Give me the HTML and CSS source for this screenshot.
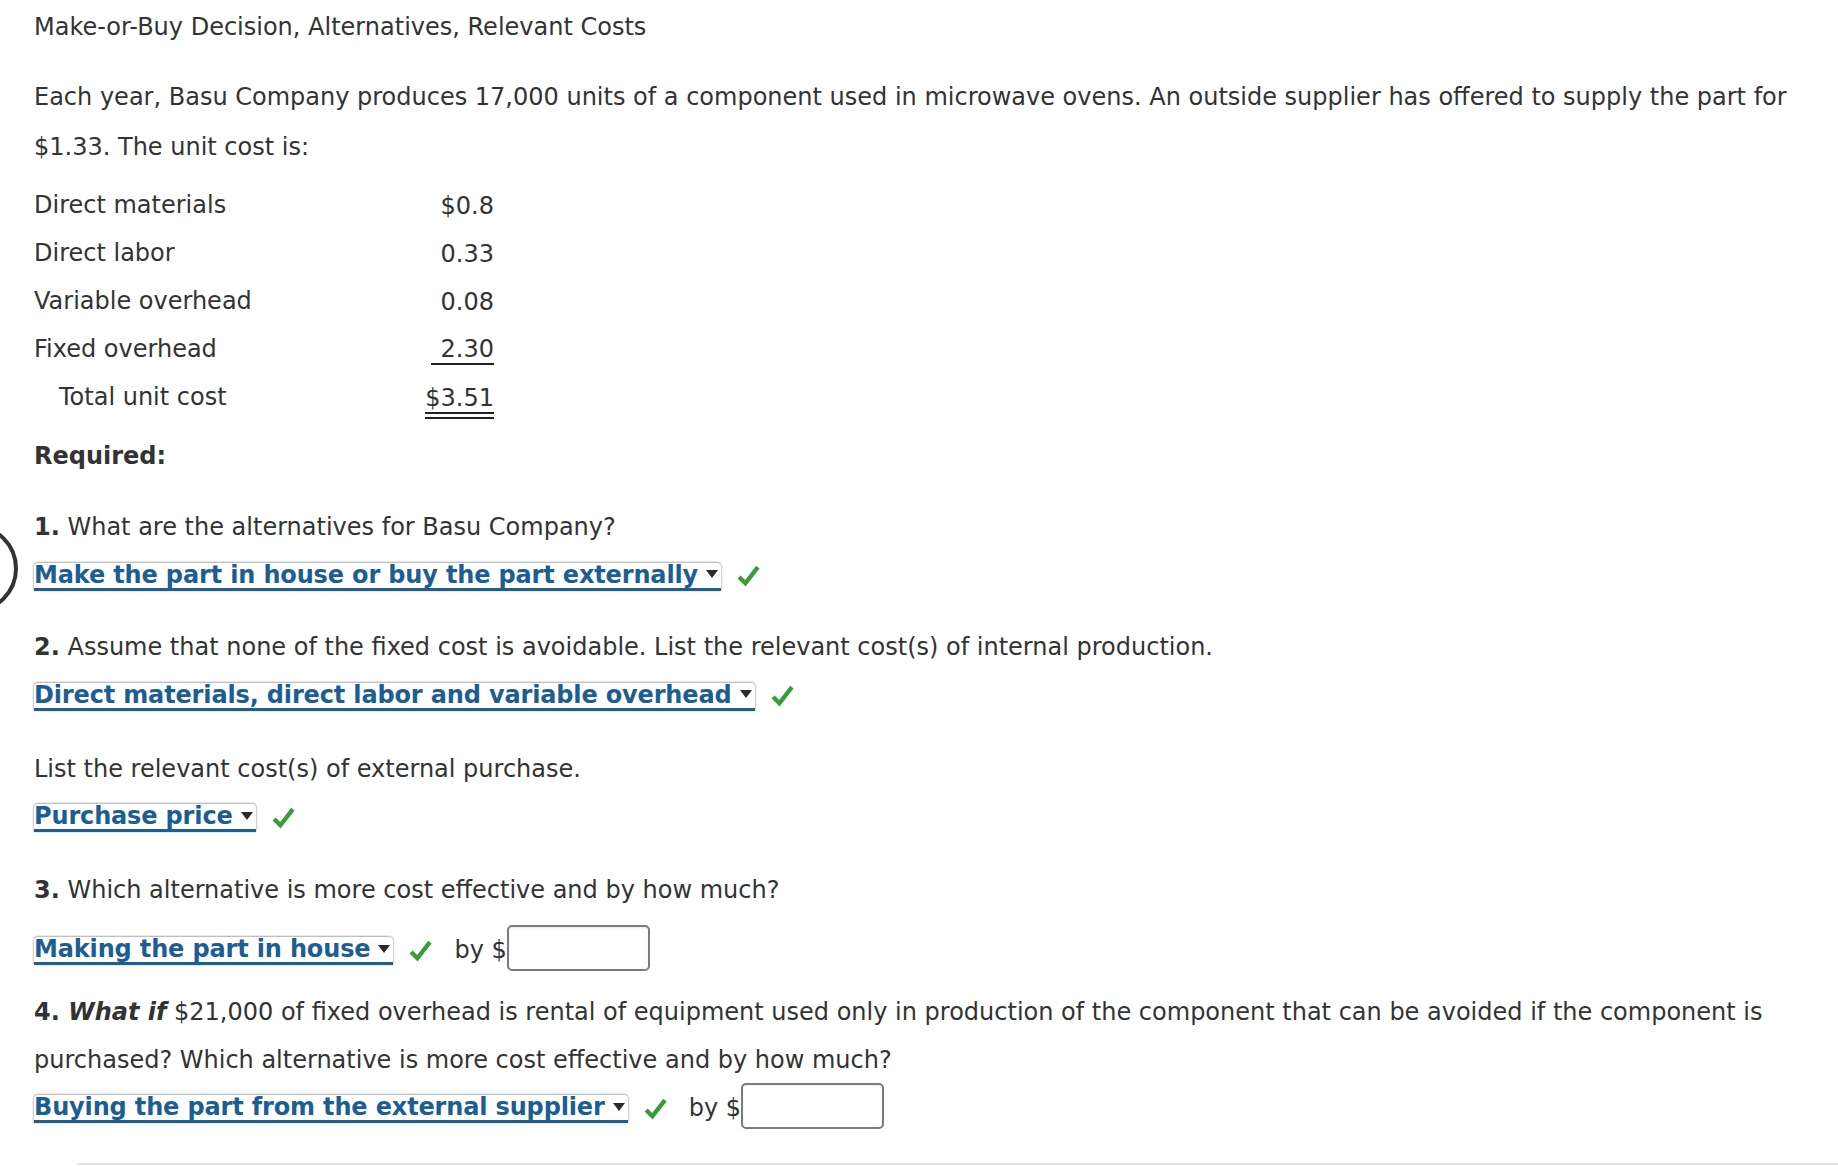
FILE: index.html
```html
<!DOCTYPE html>
<html lang="en">
<head>
<meta charset="utf-8">
<title>Make-or-Buy Decision</title>
<link rel="stylesheet" href="styles.css">
</head>
<body>
<div class="marker"></div>
<main class="page">
  <div class="title">Make-or-Buy Decision, Alternatives, Relevant Costs</div>

  <p class="intro">Each year, Basu Company produces 17,000 units of a component used in microwave ovens. An outside supplier has offered to supply the part for $1.33. The unit cost is:</p>

  <div class="costs">
    <div class="label">Direct materials</div><div class="val"><span>$0.8</span></div>
    <div class="label">Direct labor</div><div class="val"><span>0.33</span></div>
    <div class="label">Variable overhead</div><div class="val"><span>0.08</span></div>
    <div class="label">Fixed overhead</div><div class="val"><span class="single">2.30</span></div>
    <div class="label total">Total unit cost</div><div class="val"><span class="double">$3.51</span></div>
  </div>

  <div class="required">Required:</div>

  <div class="q q1"><b>1.</b> What are the alternatives for Basu Company?</div>
  <div class="answer a1">
    <span class="dd">Make the part in house or buy the part externally<i class="arrow"></i></span>
    <svg class="check" viewBox="0 0 24 24"><path d="M3 13.5 L9 19.5 L21 4"/></svg>
  </div>

  <div class="q q2"><b>2.</b> Assume that none of the fixed cost is avoidable. List the relevant cost(s) of internal production.</div>
  <div class="answer a2">
    <span class="dd">Direct materials, direct labor and variable overhead<i class="arrow"></i></span>
    <svg class="check" viewBox="0 0 24 24"><path d="M3 13.5 L9 19.5 L21 4"/></svg>
  </div>

  <div class="q q2b">List the relevant cost(s) of external purchase.</div>
  <div class="answer a2b">
    <span class="dd">Purchase price<i class="arrow"></i></span>
    <svg class="check" viewBox="0 0 24 24"><path d="M3 13.5 L9 19.5 L21 4"/></svg>
  </div>

  <div class="q q3"><b>3.</b> Which alternative is more cost effective and by how much?</div>
  <div class="answer a3">
    <span class="dd">Making the part in house<i class="arrow"></i></span>
    <svg class="check" viewBox="0 0 24 24"><path d="M3 13.5 L9 19.5 L21 4"/></svg>
    <span class="by">by $</span><span class="input"></span>
  </div>

  <div class="q q4"><b>4. <em>What if</em></b> $21,000 of fixed overhead is rental of equipment used only in production of the component that can be avoided if the component is purchased? Which alternative is more cost effective and by how much?</div>
  <div class="answer a4">
    <span class="dd">Buying the part from the external supplier<i class="arrow"></i></span>
    <svg class="check" viewBox="0 0 24 24"><path d="M3 13.5 L9 19.5 L21 4"/></svg>
    <span class="by">by $</span><span class="input"></span>
  </div>

  <div class="rule"></div>
</main>
</body>
</html>
```

FILE: styles.css
```css
html, body {
  margin: 0;
  padding: 0;
  height: 1166px;
  overflow: hidden;
  background: #fff;
}
body {
  font-family: "DejaVu Sans", Verdana, sans-serif;
  font-size: 24px;
  color: #333;
  position: relative;
}
.marker {
  position: absolute;
  left: -71px;
  top: 524px;
  width: 81px;
  height: 81px;
  border: 4px solid #333;
  border-radius: 50%;
}
.page {
  padding: 4px 0 0 34px;
}
.title {
  line-height: 46px;
}
.intro {
  margin: 22px 0 0 0;
  line-height: 50px;
  padding-right: 20px;
}
.costs {
  margin-top: 9px;
  display: grid;
  grid-template-columns: 380px 80px;
  line-height: 48px;
}
.label.total {
  padding-left: 25px;
}
.val {
  text-align: right;
}
.val span {
  display: inline-block;
  line-height: 28px;
  vertical-align: middle;
}
.val .single {
  padding-left: 10px;
  border-bottom: 2px solid #222;
}
.val .double {
  border-bottom: 7px double #222;
  margin-top: 7px;
}
.required {
  margin-top: 12px;
  line-height: 46px;
  font-weight: bold;
}
.q {
  line-height: 46px;
}
.q b em {
  font-style: italic;
}
.q1 { margin-top: 25px; }
.q2 { margin-top: 28px; }
.q2b { margin-top: 30px; }
.q3 { margin-top: 27px; }
.q4 { margin-top: 15px; line-height: 48px; }
.answer {
  box-sizing: border-box;
  height: 46px;
  display: flex;
  align-items: center;
}
.a1, .a2 { padding-top: 5px; }
.a2b { margin-top: 2px; }
.a3 { margin-top: 14px; }
.a4 { margin-top: 1px; }
.dd {
  display: inline-flex;
  align-items: center;
  height: 25px;
  line-height: 25px;
  padding: 0 3px 0 0;
  font-weight: bold;
  letter-spacing: -0.15px;
  color: #1c5e94;
  background: #fff;
  border-radius: 4px 4px 0 0;
  border-bottom: 3px solid #1f5f8e;
  box-shadow: 0 -1px 2px rgba(0,0,0,0.25), -1px 0 2px rgba(0,0,0,0.15), 1px 0 2px rgba(0,0,0,0.15);
  margin-top: 2px;
}
.arrow {
  display: inline-block;
  width: 0;
  height: 0;
  margin-left: 8px;
  margin-top: -2px;
  border-left: 6px solid transparent;
  border-right: 6px solid transparent;
  border-top: 8px solid #2a2a2a;
}
.check {
  width: 25px;
  height: 25px;
  margin-left: 15px;
  fill: none;
  stroke: #3a9b3a;
  stroke-width: 4.2;
  stroke-linejoin: miter;
}
.by {
  margin-left: 21px;
}
.input {
  display: inline-block;
  width: 139px;
  height: 42px;
  border: 2px solid #7b7b7b;
  border-radius: 5px;
  margin-top: -4px;
  box-shadow: inset 0 1px 2px rgba(0,0,0,0.08);
}
.rule {
  margin: 32px 0 0 43px;
  border-top: 2px solid #e3e7e9;
}
```
